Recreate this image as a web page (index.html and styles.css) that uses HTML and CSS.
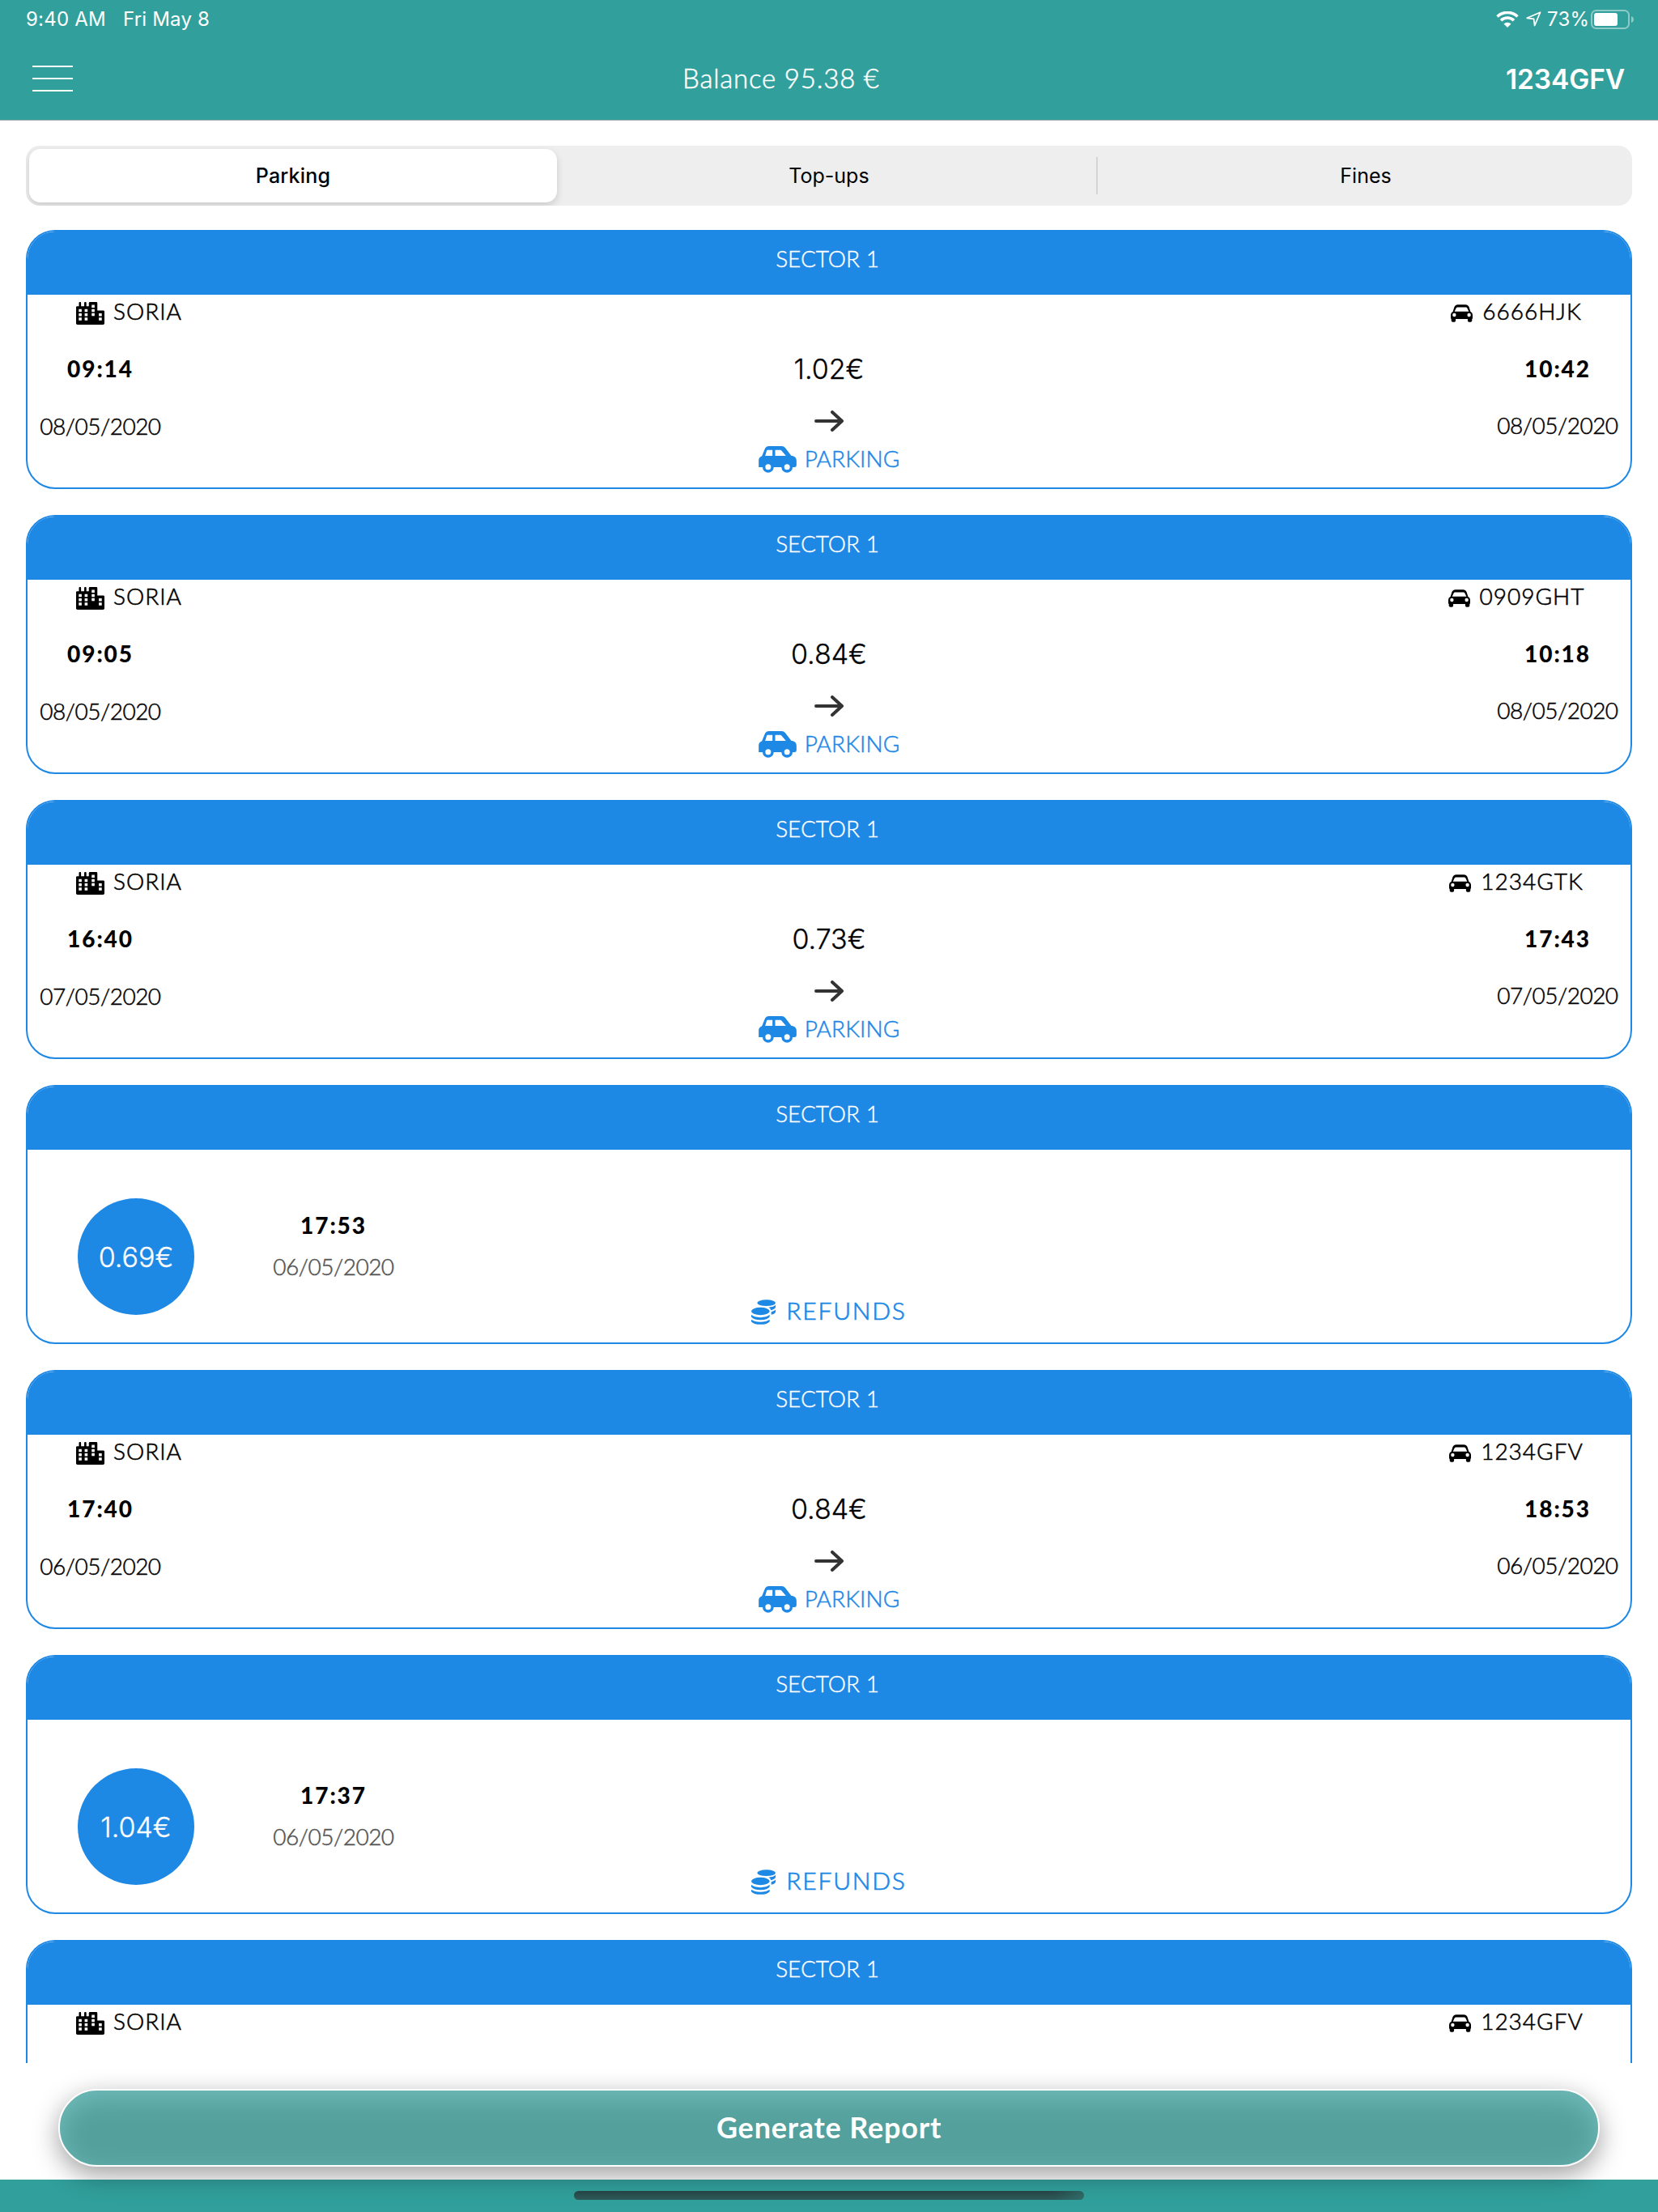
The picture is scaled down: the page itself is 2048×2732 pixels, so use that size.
FILE: index.html
```html
<!DOCTYPE html>
<html lang="en">
<head>
    <meta charset="UTF-8">
    <meta name="viewport" content="width=device-width, initial-scale=1.0">
    <title>Operations</title>
    <link rel="stylesheet" href="styles.css">
</head>
<body>

    <!-- Icons -->
    <svg class="sprite">
        <symbol id="city" viewBox="0 0 640 512">
            <path d="M616 192H480V24c0-13-11-24-24-24H312c-13 0-24 11-24 24v72h-56V16c0-9-7-16-16-16h-16c-9 0-16 7-16 16v80h-72V16c0-9-7-16-16-16H80c-9 0-16 7-16 16v80H24c-13 0-24 11-24 24v360c0 18 14 32 32 32h576c18 0 32-14 32-32V216c0-13-11-24-24-24z"/>
            <path fill="#fff" d="M60 160h66v62H60zM60 256h66v62H60zM60 352h66v62H60zM194 160h66v62h-66zM194 256h66v62h-66zM194 352h66v62h-66zM352 64h66v62h-66zM352 160h66v62h-66zM352 252h66v62h-66zM514 256h66v62h-66zM514 352h66v62h-66z"/>
        </symbol>
        <symbol id="car" viewBox="0 0 80 64">
            <path fill-rule="evenodd" d="M13 9Q17 0 26 0H54Q63 0 67 9L72 25Q80 30 80 37V48Q80 52 78 53V59Q78 64 72 64H67Q62 64 62 59V53H18V59Q18 64 13 64H8Q2 64 2 59V53Q0 52 0 48V37Q0 30 8 25ZM25 10Q21 10 19 14L14 25H66L61 14Q59 10 55 10Z"/>
            <circle cx="13" cy="38" r="6.5" fill="#fff"/>
            <circle cx="67" cy="38" r="6.5" fill="#fff"/>
        </symbol>
        <symbol id="car-side" viewBox="0 0 140 99">
            <path fill-rule="evenodd" d="M23 10Q28 0 38 0H86Q93 0 98 6L121 36H124Q140 39 140 54V71Q140 78 133 78H0V52Q0 42 12 37ZM33 14Q31 14 30 16L24 36H51V14ZM61 14V36H101L85 17Q83 14 80 14Z"/>
            <circle cx="35" cy="78" r="20.5"/>
            <circle cx="105" cy="78" r="20.5"/>
            <circle cx="35" cy="77" r="10.5" fill="#fff"/>
            <circle cx="105" cy="77" r="10.5" fill="#fff"/>
        </symbol>
        <symbol id="coins" viewBox="0 0 90 92">
            <ellipse cx="56" cy="12" rx="34" ry="11.5"/>
            <ellipse cx="34" cy="43" rx="34" ry="14"/>
            <path d="M64 29Q84 27 90 20V29Q87 36 73 39Q71 32 64 29ZM74 45Q86 42 90 37V46Q88 53 74 56Z"/>
            <path d="M0 56Q12 66 34 66T68 56V64Q60 75 34 75T0 64ZM0 74Q12 83 34 83T68 74V81Q60 92 34 92T0 81Z"/>
        </symbol>
        <symbol id="arrow" viewBox="0 0 36 26">
            <path d="M2 13H33M22 2L34 13L22 24" fill="none" stroke="#333" stroke-width="4" stroke-linecap="round" stroke-linejoin="round"/>
        </symbol>
    </svg>

    <header class="header">
        <div class="status-bar">
            <span class="status-time">9:40 AM</span>
            <span class="status-date">Fri May 8</span>
            <svg class="wifi" viewBox="0 0 28 20">
                <path d="M1.5 6.5a18 18 0 0 1 25 0M6 11.3a11.5 11.5 0 0 1 16 0" fill="none" stroke="#fff" stroke-width="3.6"/>
                <path d="M14 20L9.5 15.6a6.4 6.4 0 0 1 9 0z" fill="#fff"/>
            </svg>
            <svg class="location" viewBox="0 0 19 19">
                <path d="M17.6 1.2L1.2 8.3L9.6 9.4L10.6 17.6Z" fill="none" stroke="#fff" stroke-width="1.7" stroke-linejoin="round"/>
            </svg>
            <span class="status-charge">73%</span>
            <svg class="battery" viewBox="0 0 54 24">
                <rect x="1" y="1" width="46" height="22" rx="5.5" fill="none" stroke="#fff" stroke-opacity=".45" stroke-width="2"/>
                <rect x="4" y="4" width="29" height="16" rx="3" fill="#fff"/>
                <path d="M50 8q3 1 3 4t-3 4z" fill="#fff" fill-opacity=".45"/>
            </svg>
        </div>
        <nav class="nav">
            <div class="menu"><i></i><i></i><i></i></div>
            <div class="balance">Balance 95.38 €</div>
            <div class="vehicle">1234GFV</div>
        </nav>
    </header>

    <div class="tabs">
        <div class="tab active">Parking</div>
        <div class="tab">Top-ups</div>
        <div class="tab last">Fines</div>
    </div>

    <main class="list">

        <div class="card">
            <div class="card-title">SECTOR 1</div>
            <div class="meta">
                <div class="place"><svg><use href="#city"/></svg>SORIA</div>
                <div class="plate"><svg><use href="#car"/></svg>6666HJK</div>
            </div>
            <div class="detail">
                <div class="when"><div class="time">09:14</div><div class="date">08/05/2020</div></div>
                <div class="middle">
                    <div class="amount">1.02€</div>
                    <svg class="arrow"><use href="#arrow"/></svg>
                    <div class="parking"><svg><use href="#car-side"/></svg>PARKING</div>
                </div>
                <div class="when end"><div class="time">10:42</div><div class="date">08/05/2020</div></div>
            </div>
        </div>

        <div class="card">
            <div class="card-title">SECTOR 1</div>
            <div class="meta">
                <div class="place"><svg><use href="#city"/></svg>SORIA</div>
                <div class="plate"><svg><use href="#car"/></svg>0909GHT</div>
            </div>
            <div class="detail">
                <div class="when"><div class="time">09:05</div><div class="date">08/05/2020</div></div>
                <div class="middle">
                    <div class="amount">0.84€</div>
                    <svg class="arrow"><use href="#arrow"/></svg>
                    <div class="parking"><svg><use href="#car-side"/></svg>PARKING</div>
                </div>
                <div class="when end"><div class="time">10:18</div><div class="date">08/05/2020</div></div>
            </div>
        </div>

        <div class="card">
            <div class="card-title">SECTOR 1</div>
            <div class="meta">
                <div class="place"><svg><use href="#city"/></svg>SORIA</div>
                <div class="plate"><svg><use href="#car"/></svg>1234GTK</div>
            </div>
            <div class="detail">
                <div class="when"><div class="time">16:40</div><div class="date">07/05/2020</div></div>
                <div class="middle">
                    <div class="amount">0.73€</div>
                    <svg class="arrow"><use href="#arrow"/></svg>
                    <div class="parking"><svg><use href="#car-side"/></svg>PARKING</div>
                </div>
                <div class="when end"><div class="time">17:43</div><div class="date">07/05/2020</div></div>
            </div>
        </div>

        <div class="card">
            <div class="card-title">SECTOR 1</div>
            <div class="refund">
                <div class="refund-info">
                    <div class="circle">0.69€</div>
                    <div class="refund-when"><div class="time">17:53</div><div class="date">06/05/2020</div></div>
                </div>
                <div class="refund-label"><svg><use href="#coins"/></svg>REFUNDS</div>
            </div>
        </div>

        <div class="card">
            <div class="card-title">SECTOR 1</div>
            <div class="meta">
                <div class="place"><svg><use href="#city"/></svg>SORIA</div>
                <div class="plate"><svg><use href="#car"/></svg>1234GFV</div>
            </div>
            <div class="detail">
                <div class="when"><div class="time">17:40</div><div class="date">06/05/2020</div></div>
                <div class="middle">
                    <div class="amount">0.84€</div>
                    <svg class="arrow"><use href="#arrow"/></svg>
                    <div class="parking"><svg><use href="#car-side"/></svg>PARKING</div>
                </div>
                <div class="when end"><div class="time">18:53</div><div class="date">06/05/2020</div></div>
            </div>
        </div>

        <div class="card">
            <div class="card-title">SECTOR 1</div>
            <div class="refund">
                <div class="refund-info">
                    <div class="circle">1.04€</div>
                    <div class="refund-when"><div class="time">17:37</div><div class="date">06/05/2020</div></div>
                </div>
                <div class="refund-label"><svg><use href="#coins"/></svg>REFUNDS</div>
            </div>
        </div>

        <div class="card">
            <div class="card-title">SECTOR 1</div>
            <div class="meta">
                <div class="place"><svg><use href="#city"/></svg>SORIA</div>
                <div class="plate"><svg><use href="#car"/></svg>1234GFV</div>
            </div>
        </div>

    </main>

    <button class="report">Generate Report</button>

    <footer class="bottom-bar">
        <div class="home-indicator"></div>
    </footer>

</body>
</html>
```

FILE: styles.css
```css
* {
    box-sizing: border-box;
}

body {
    margin: 0;
    height: 2732px;
    display: flex;
    flex-direction: column;
    overflow: hidden;
    background-color: #fff;
    color: #000;
    font-family: Lato, "Open Sans", sans-serif;
    font-size: 28px;
}

svg {
    display: block;
    flex: none;
}

.sprite {
    position: absolute;
    width: 0;
    height: 0;
}

/* Header */
.header {
    flex: none;
    height: 149px;
    background-color: #319f9b;
    border-bottom: 1px solid #a9b0b0;
    color: #fff;
}

.status-bar {
    display: flex;
    align-items: center;
    height: 47px;
    padding: 0 29px 0 32px;
    font-family: Inter, sans-serif;
    font-size: 24px;
    font-weight: 400;
    letter-spacing: 0.2px;
}

.status-time {
    width: 120px;
}

.status-date {
    flex: 1;
}

.wifi {
    width: 28px;
    height: 20px;
    margin-right: 9px;
}

.location {
    width: 19px;
    height: 19px;
    margin-right: 7px;
}

.status-charge {
    width: 54px;
}

.battery {
    width: 54px;
    height: 24px;
}

.nav {
    display: flex;
    align-items: center;
    justify-content: space-between;
    height: 101px;
    padding: 0 41px 0 40px;
}

.menu {
    display: flex;
    flex-direction: column;
    gap: 13px;
    width: 50px;
    margin-bottom: 2px;
}

.menu i {
    height: 2px;
    background-color: #fff;
}

.balance {
    margin: 0 20px 3px 0;
    font-size: 33px;
    font-weight: 300;
    letter-spacing: 0.8px;
    -webkit-text-stroke: 0.5px;
}

.vehicle {
    font-family: Inter, sans-serif;
    font-size: 33.5px;
    font-weight: 600;
    letter-spacing: -0.1px;
}

/* Tabs */
.tabs {
    flex: none;
    display: flex;
    height: 74px;
    margin: 31px 32px 30px;
    padding: 4px;
    border-radius: 17px;
    background-color: #eee;
    overflow: hidden;
    font-family: Inter, sans-serif;
    font-size: 25px;
    font-weight: 400;
}

.tab {
    flex: 1;
    display: flex;
    align-items: center;
    justify-content: center;
    padding-left: 6px;
}

.tab.active {
    flex: none;
    width: 652px;
    padding: 0;
    border-radius: 14px;
    background-color: #fff;
    box-shadow: 0 4px 10px rgba(0, 0, 0, 0.15);
    font-weight: 500;
    letter-spacing: 0.2px;
}

.tab.last {
    flex: none;
    width: 658px;
    height: 46px;
    margin-top: 10px;
    border-left: 2px solid #d5d5d6;
}

/* List */
.list {
    flex: none;
    height: 2264px;
    padding: 0 32px;
    overflow: hidden;
}

.card {
    height: 320px;
    margin-bottom: 32px;
    border: 2px solid #1e88e5;
    border-radius: 36px;
    background-color: #fff;
    overflow: hidden;
}

.card-title {
    height: 78px;
    padding-right: 4px;
    background-color: #1e88e5;
    color: #fff;
    font-weight: 300;
    line-height: 67px;
    text-align: center;
    -webkit-text-stroke: 0.4px;
}

.meta {
    display: flex;
    justify-content: space-between;
    height: 40px;
    padding: 0 51px 0 60px;
    font-weight: 300;
    line-height: 38px;
    letter-spacing: 1px;
    -webkit-text-stroke: 0.6px;
}

.place, .plate, .parking, .refund-label {
    display: flex;
    align-items: center;
}

.place svg {
    width: 35px;
    height: 28px;
    margin: 5px 11px 0 0;
}

.plate {
    justify-content: center;
    width: 180px;
}

.plate svg {
    width: 27px;
    height: 22px;
    margin: 5px 12px 0 0;
}

.detail {
    display: flex;
    justify-content: space-between;
    padding-top: 31px;
    line-height: 40px;
    text-align: center;
}

.when {
    width: 180px;
}

.time {
    font-weight: 900;
    letter-spacing: 1.9px;
}

.date {
    margin-top: 31px;
    font-weight: 300;
    letter-spacing: -0.5px;
    -webkit-text-stroke: 0.5px;
}

.end .date {
    margin-top: 30px;
}

.middle {
    display: flex;
    flex-direction: column;
    align-items: center;
}

.amount, .circle {
    font-family: Inter, sans-serif;
    font-size: 34px;
    font-weight: 300;
    -webkit-text-stroke: 0.3px;
}

.amount {
    padding-top: 1px;
}

.arrow {
    width: 36px;
    height: 26px;
    margin: 31px 0 13px;
}

.parking {
    color: #1e88e5;
    font-weight: 300;
    letter-spacing: 0.1px;
    -webkit-text-stroke: 0.5px;
}

.parking svg {
    width: 47px;
    height: 33px;
    margin: 2px 10px 0 0;
    fill: #1e88e5;
}

.place svg, .plate svg, .parking svg {
    stroke-width: 0;
}

/* Refunds */
.refund {
    display: grid;
    grid-template-columns: 1fr auto 1fr;
    height: 238px;
    line-height: 40px;
}

.refund-info {
    display: flex;
    padding: 60px 0 0 62px;
}

.circle {
    width: 144px;
    height: 144px;
    border-radius: 50%;
    background-color: #1e88e5;
    color: #fff;
    line-height: 145px;
    text-align: center;
}

.refund-when {
    width: 180px;
    margin: 13px 0 0 82px;
    text-align: center;
}

.refund-when .date {
    margin-top: 11px;
    color: #555;
}

.refund-label {
    align-self: end;
    margin-bottom: 20px;
    color: #1e88e5;
    font-size: 30px;
    font-weight: 300;
    letter-spacing: 1.8px;
    -webkit-text-stroke: 0.7px;
}

.refund-label svg {
    width: 30px;
    height: 31px;
    margin: 5px 13px 0 0;
    fill: #1e88e5;
}

/* Footer */
.report {
    position: relative;
    flex: none;
    height: 96px;
    margin: 32px 72px 16px;
    padding: 0 0 3px;
    border: 2px solid #fff;
    border-radius: 48px;
    background-color: #54a09d;
    box-shadow: 0 10px 32px rgba(0, 0, 0, 0.38), inset 0 10px 32px #70bcba;
    color: #fff;
    font-family: Lato, sans-serif;
    font-size: 36px;
    font-weight: 700;
    letter-spacing: 0.8px;
}

.bottom-bar {
    flex: none;
    display: flex;
    justify-content: center;
    height: 40px;
    padding-top: 14px;
    background-color: #319f9b;
}

.home-indicator {
    position: relative;
    width: 630px;
    height: 11px;
    border-radius: 6px;
    background: linear-gradient(to right, transparent 94%, rgba(49, 120, 117, 0.6)), linear-gradient(to bottom, #264344, #2d5a59);
}
```
